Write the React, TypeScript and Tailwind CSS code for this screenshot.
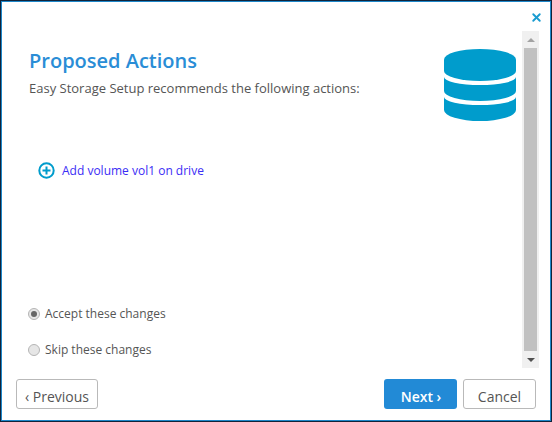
import { X } from "lucide-react";

function DatabaseIcon() {
  return (
    <svg width="72" height="72" viewBox="0 0 72 72" className="shrink-0 mr-[1px] mt-[2px]">
      <path d="M0 10.500A36 10.500 0 0 1 72 10.500V22A36 10 0 0 1 0 22Z" fill="#009ccc" />
      <path d="M0 28A36 8 0 0 0 72 28V42A36 10 0 0 1 0 42Z" fill="#009ccc" />
      <path d="M0 48A36 8 0 0 0 72 48V61A36 11 0 0 1 0 61Z" fill="#009ccc" />
    </svg>
  );
}

function Radio({ label, checked }: { label: string; checked?: boolean }) {
  return (
    <label className="flex items-center gap-[5px] text-[12px] text-[#555555]">
      <span className="w-[12px] h-[12px] rounded-full border border-[#b5b5b5] bg-[#e6e6e6] flex items-center justify-center">
        {checked && <span className="w-[6px] h-[6px] rounded-full bg-[#666666]" />}
      </span>
      {label}
    </label>
  );
}

export default function App() {
  return (
    <div className="w-[552px] h-[422px] border border-[#10233a]">
      <div className="h-full bg-white border border-[#1d87c9] flex flex-col font-['Open_Sans',sans-serif] overflow-hidden">
        <div className="h-[29px] flex justify-end items-center pr-[7px] pt-[2px]">
          <X size={13} strokeWidth={3.5} className="text-[#1a9cd0]" />
        </div>

        <div className="h-[337px] flex">
          <div className="flex-1 pl-[26px] pr-[5px] flex flex-col">
            <div className="flex justify-between pt-[16px]">
              <div className="pl-[1px]">
                <h1 className="text-[20px] leading-[27px] font-semibold text-[#2a8dd6]">Proposed Actions</h1>
                <p className="text-[13px] leading-[18px] mt-[5px] text-[#555555]">
                  Easy Storage Setup recommends the following actions:
                </p>
              </div>
              <DatabaseIcon />
            </div>

            <div className="flex items-center gap-[7px] pl-[10px] mt-[41px]">
              <svg width="17" height="17" viewBox="0 0 17 17" className="-mt-[2px]">
                <circle cx="8.500" cy="8.500" r="7.200" fill="none" stroke="#009ccc" strokeWidth="2" />
                <path d="M8.500 4.500v8M4.500 8.500h8" stroke="#009ccc" strokeWidth="2" />
              </svg>
              <span className="text-[12px] text-[#3b2df5]">Add volume vol1 on drive</span>
            </div>

            <div className="mt-auto pb-[9px] flex flex-col gap-[18px]">
              <Radio label="Accept these changes" checked />
              <Radio label="Skip these changes" />
            </div>
          </div>

          <div className="w-[17px] mr-[11px] bg-[#f0f0f0] flex flex-col items-center">
            <div className="h-[17px] flex items-center justify-center">
              <span className="w-0 h-0 border-x-[4px] border-x-transparent border-b-[4px] border-b-[#a3a3a3]" />
            </div>
            <div className="flex-1 w-[13px] bg-[#c1c1c1]" />
            <div className="h-[17px] flex items-center justify-center">
              <span className="w-0 h-0 border-x-[4px] border-x-transparent border-t-[4px] border-t-[#505050]" />
            </div>
          </div>
        </div>

        <div className="flex-1 flex items-start pt-[11px] pl-[14px] pr-[14px]">
          <button className="w-[82px] h-[30px] pt-[5px] border border-[#b9b9b9] rounded-[3px] text-[14px] text-[#555555] bg-white">
            ‹ Previous
          </button>
          <button className="ml-auto w-[73px] h-[30px] pt-[5px] pl-[1px] rounded-[3px] text-[14px] font-semibold text-white bg-[#228ad6]">
            Next ›
          </button>
          <button className="ml-[6px] w-[73px] h-[30px] pt-[5px] border border-[#b9b9b9] rounded-[3px] text-[14px] text-[#555555] bg-white">
            Cancel
          </button>
        </div>
      </div>
    </div>
  );
}
